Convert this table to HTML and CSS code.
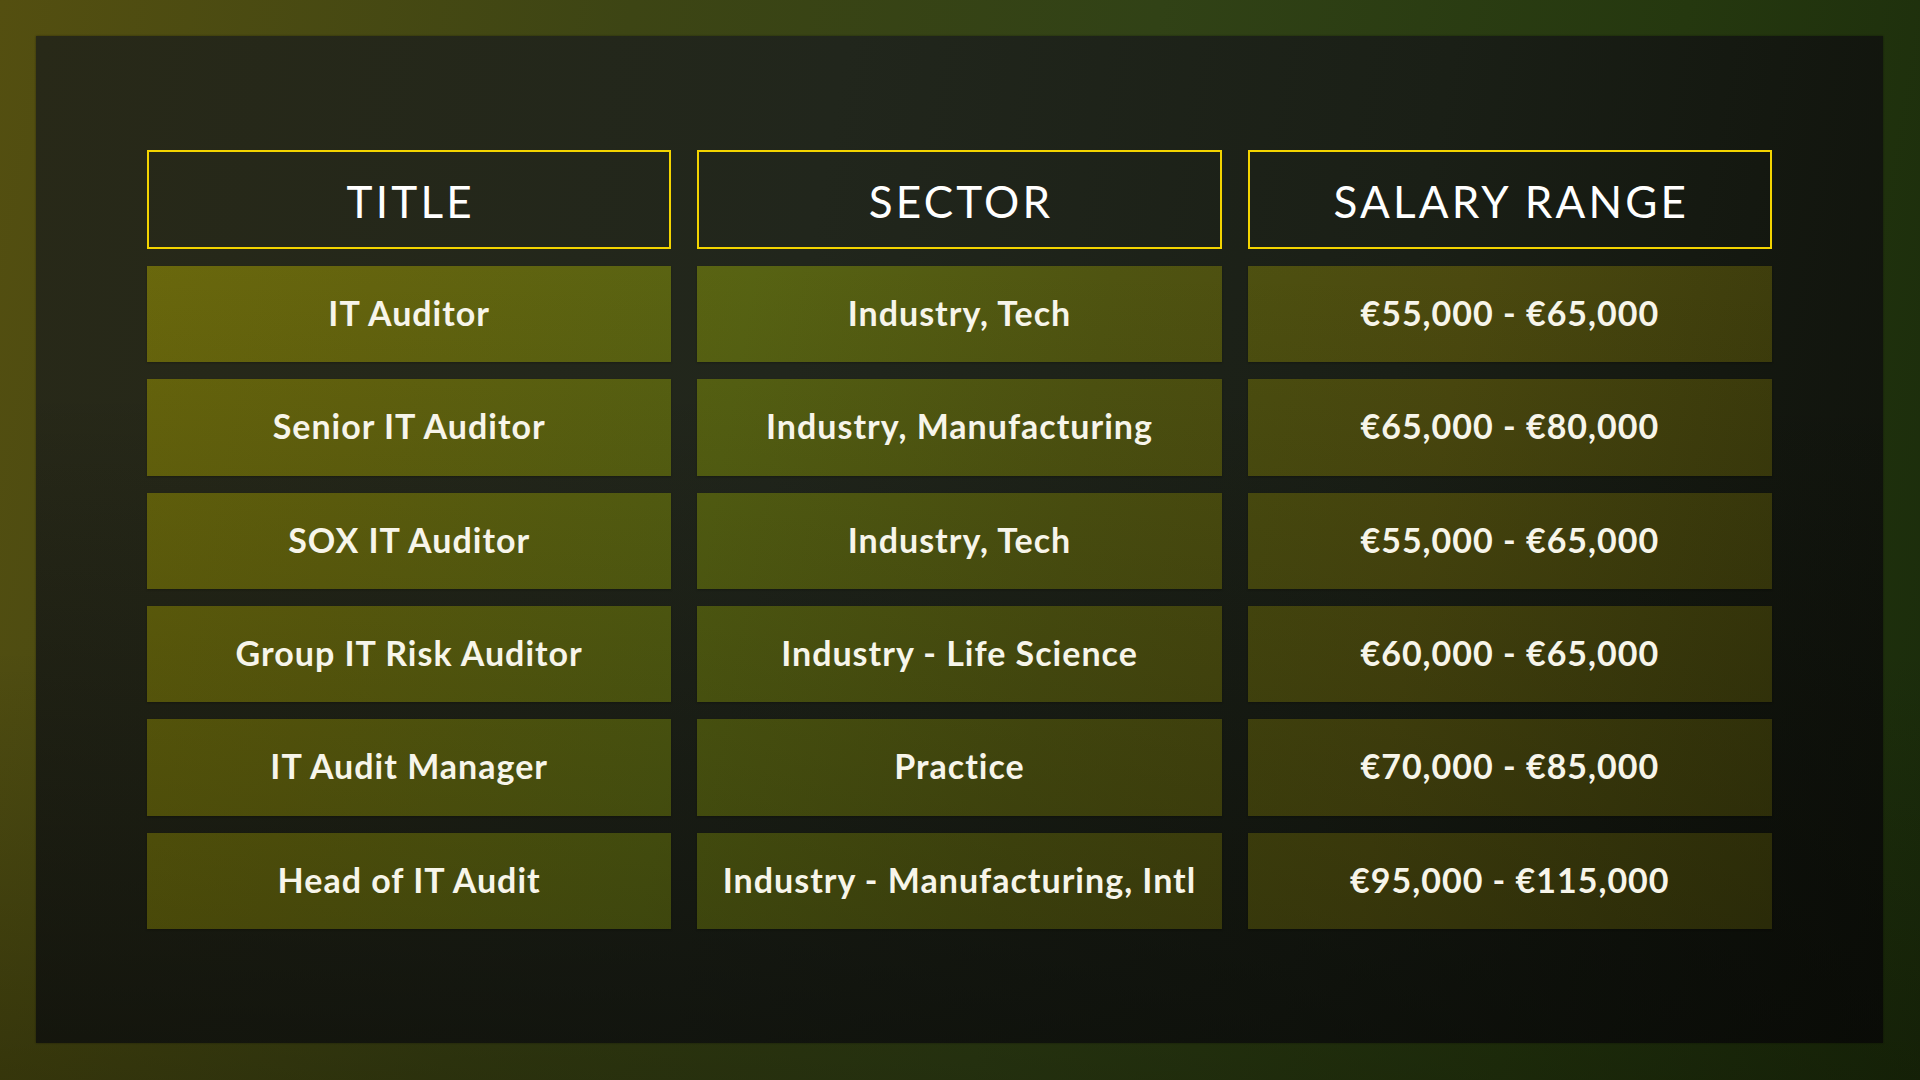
FILE: index.html
```html
<!DOCTYPE html>
<html lang="en">
<head>
<meta charset="utf-8">
<title>IT Audit Salaries</title>
<link rel="stylesheet" href="styles.css">
</head>
<body>
<main class="panel">
  <div class="table">
    <div class="head">TITLE</div>
    <div class="head">SECTOR</div>
    <div class="head">SALARY RANGE</div>

    <div class="cell">IT Auditor</div>
    <div class="cell">Industry, Tech</div>
    <div class="cell">€55,000 - €65,000</div>

    <div class="cell">Senior IT Auditor</div>
    <div class="cell">Industry, Manufacturing</div>
    <div class="cell">€65,000 - €80,000</div>

    <div class="cell">SOX IT Auditor</div>
    <div class="cell">Industry, Tech</div>
    <div class="cell">€55,000 - €65,000</div>

    <div class="cell">Group IT Risk Auditor</div>
    <div class="cell">Industry - Life Science</div>
    <div class="cell">€60,000 - €65,000</div>

    <div class="cell">IT Audit Manager</div>
    <div class="cell">Practice</div>
    <div class="cell">€70,000 - €85,000</div>

    <div class="cell">Head of IT Audit</div>
    <div class="cell">Industry - Manufacturing, Intl</div>
    <div class="cell">€95,000 - €115,000</div>
  </div>
</main>
</body>
</html>
```

FILE: styles.css
```css
html, body {
  margin: 0;
  padding: 0;
  width: 1920px;
  height: 1080px;
  overflow: hidden;
}

body {
  font-family: "Lato", "Liberation Sans", sans-serif;
  color: #ffffff;
  background:
    linear-gradient(to bottom, rgba(0,0,0,0) 60%, rgba(10,12,0,0.35) 100%),
    linear-gradient(100deg, #544f10 0%, #3d4514 30%, #314216 55%, #25380f 80%, #1a2b0b 100%);
  padding: 36px 37px 37px 36px;
  box-sizing: border-box;
}

.panel {
  height: 100%;
  box-sizing: border-box;
  padding: 114px 0 0 111px;
  background:
    linear-gradient(to bottom, rgba(0,0,0,0) 35%, rgba(5,6,3,0.55) 100%),
    linear-gradient(100deg, #282918 0%, #21261c 40%, #1a1f16 70%, #0f120b 100%);
  box-shadow: 0 0 2px rgba(0,0,0,0.4);
}

.table {
  width: 1625px;
  display: grid;
  grid-template-columns: repeat(3, 1fr);
  grid-template-rows: 99px repeat(6, 96.33px);
  column-gap: 26px;
  row-gap: 17px;
}

.head {
  border: 2px solid #f3d400;
  display: flex;
  align-items: center;
  justify-content: center;
  font-size: 44px;
  font-weight: 400;
  letter-spacing: 3.2px;
  padding-left: 3px;
  color: #ffffff;
  padding-top: 2px;
}

.cell {
  display: flex;
  align-items: center;
  justify-content: center;
  font-size: 34px;
  font-weight: 700;
  letter-spacing: 1px;
  color: #f7f5ea;
  padding-bottom: 3px;
  background:
    linear-gradient(to bottom, rgba(0,0,0,0) 20%, rgba(8,10,2,0.35) 90%),
    linear-gradient(100deg, #6e6b0c 5%, #66660e 20%, #596513 38%, #515611 55%, #4d4b0f 72%, #38380b 95%);
  background-attachment: fixed;
  box-shadow: 0 1px 2px rgba(0,0,0,0.25);
}
```
